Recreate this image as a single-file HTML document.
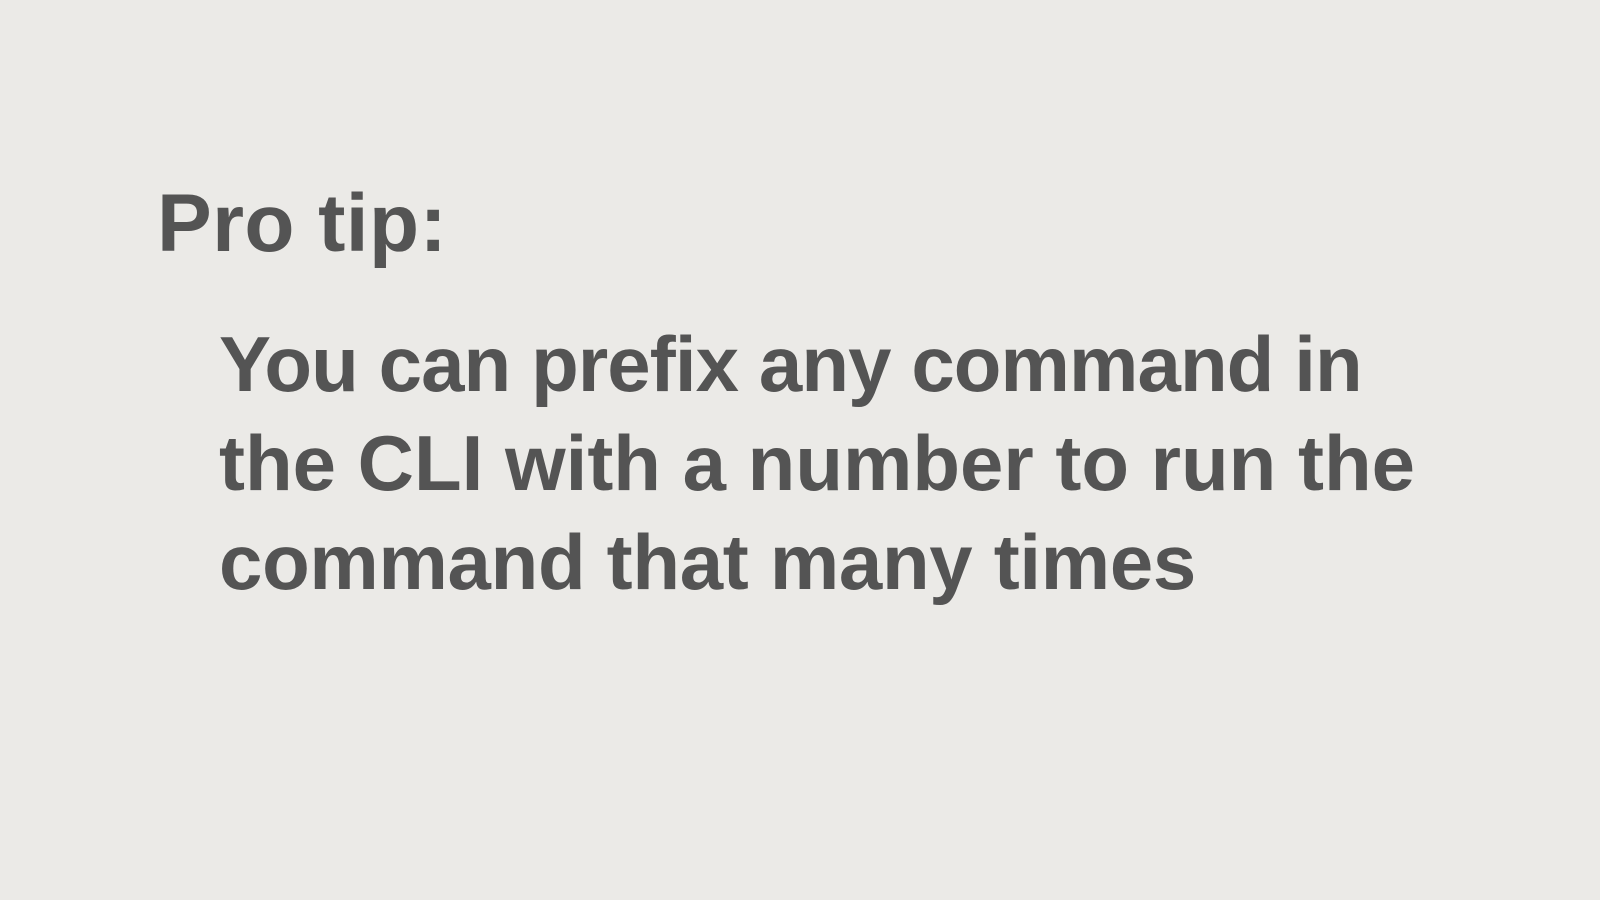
<!DOCTYPE html>
<html><head><meta charset="utf-8"><style>
html,body{margin:0;padding:0;}
body{width:1600px;height:900px;background:#ebeae7;position:relative;overflow:hidden;font-family:"Liberation Sans",sans-serif;font-weight:bold;color:#545454;}
.t{position:absolute;white-space:nowrap;line-height:1;}
.h{left:157px;top:183px;font-size:82px;letter-spacing:0.4px;}
.l{left:219px;font-size:78px;letter-spacing:-0.1px;}
</style></head><body>
<div class="t h">Pro tip:</div>
<div class="t l" style="top:325px;letter-spacing:-0.9px">You can prefix any command in</div>
<div class="t l" style="top:424px;letter-spacing:0px">the CLI with a number to run the</div>
<div class="t l" style="top:523px;letter-spacing:-0.3px">command that many times</div>
</body></html>
